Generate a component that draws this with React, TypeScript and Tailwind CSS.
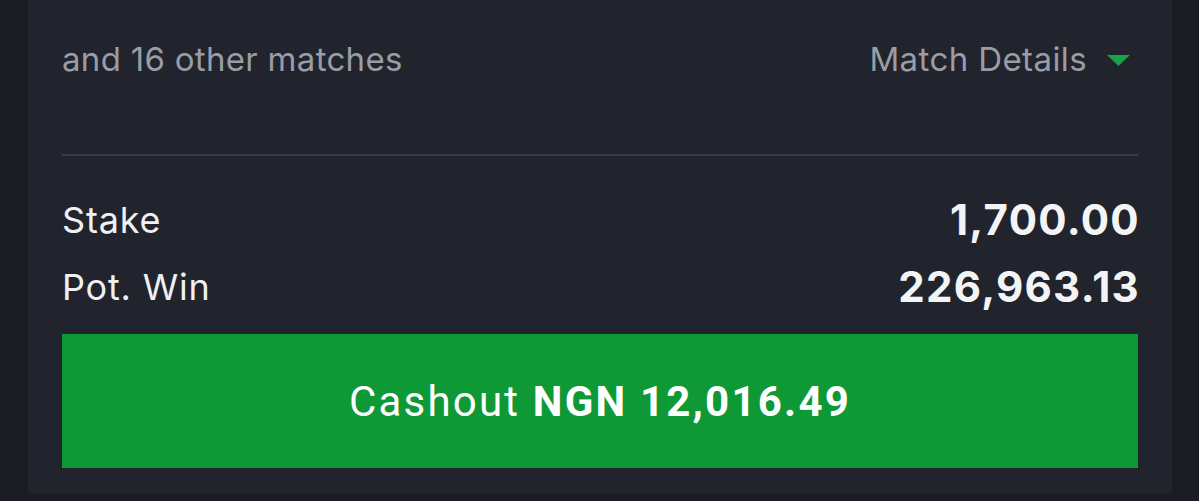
import React from 'react';

const Row: React.FC<{ label: string; value: string }> = ({ label, value }) => (
  <div className="flex items-center justify-between h-[67px]">
    <span className="text-[36px] tracking-[0.8px] text-[#eef0f3]">{label}</span>
    <span className="text-[42px] font-bold tracking-[1.3px] text-[#f3f4f6] -mr-[2px]">{value}</span>
  </div>
);

const App: React.FC = () => {
  return (
    <div className="w-[1199px] h-[501px] bg-[#1a1d24] pl-[28px] pr-[27px] overflow-hidden" style={{ fontFamily: 'Inter, "Noto Sans", sans-serif' }}>
      <div className="h-[493px] bg-[#21242d] px-[34px] flex flex-col">
        <div className="flex items-center justify-between h-[122px] pb-[2px]">
          <span className="text-[33px] tracking-[0.3px] text-[#9a9ca6]">and 16 other matches</span>
          <div className="flex items-center gap-[20px] pr-[8px]">
            <span className="text-[33px] tracking-[0.4px] text-[#9a9ca6]">Match Details</span>
            <svg width="23" height="11" viewBox="0 0 23 11" className="mt-[1px]">
              <polygon points="0,0 23,0 11.5,11" fill="#16a34a" />
            </svg>
          </div>
        </div>
        <div className="h-[2px] bg-[#393c45] mt-[32px]" />
        <div className="pt-[30px]">
          <Row label="Stake" value="1,700.00" />
          <Row label="Pot. Win" value="226,963.13" />
        </div>
        <button className="mt-[14px] h-[134px] w-full bg-[#0e9936] text-white text-[42px] tracking-[2.2px] flex items-center justify-center" style={{ fontFamily: 'Roboto, Inter, sans-serif' }}>
          <span>Cashout <span className="font-bold">NGN 12,016.49</span></span>
        </button>
      </div>
    </div>
  );
};

export default App;
